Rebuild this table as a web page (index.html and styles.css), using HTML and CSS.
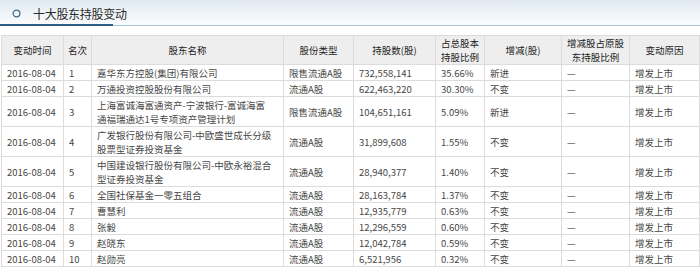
FILE: index.html
```html
<!DOCTYPE html>
<html lang="zh-CN">
<head>
<meta charset="utf-8">
<title>十大股东持股变动</title>
<link rel="stylesheet" href="styles.css">
</head>
<body>
<div class="panel">
  <div class="panel-head">
    <div class="panel-title">
      <svg class="ring" width="9" height="9" viewBox="0 0 9 9"><circle cx="4.5" cy="4.5" r="3.4" fill="none" stroke="#3f6f8e" stroke-width="1.3"/></svg>
      <span>十大股东持股变动</span>
    </div>
  </div>
  <table class="holders">
    <colgroup>
      <col class="c-date"><col class="c-rank"><col class="c-name"><col class="c-type"><col class="c-num"><col class="c-pct"><col class="c-chg"><col class="c-chgpct"><col class="c-reason">
    </colgroup>
    <thead>
      <tr>
        <th>变动时间</th><th>名次</th><th>股东名称</th><th>股份类型</th><th>持股数(股)</th><th>占总股本<br>持股比例</th><th>增减(股)</th><th>增减股占原股<br>东持股比例</th><th>变动原因</th>
      </tr>
    </thead>
    <tbody>
      <tr><td>2016-08-04</td><td>1</td><td class="name">嘉华东方控股(集团)有限公司</td><td>限售流通A股</td><td>732,558,141</td><td>35.66%</td><td>新进</td><td>—</td><td>增发上市</td></tr>
      <tr><td>2016-08-04</td><td>2</td><td class="name">万通投资控股股份有限公司</td><td>流通A股</td><td>622,463,220</td><td>30.30%</td><td>不变</td><td>—</td><td>增发上市</td></tr>
      <tr><td>2016-08-04</td><td>3</td><td class="name">上海富诚海富通资产-宁波银行-富诚海富通福瑞通达1号专项资产管理计划</td><td>限售流通A股</td><td>104,651,161</td><td>5.09%</td><td>新进</td><td>—</td><td>增发上市</td></tr>
      <tr><td>2016-08-04</td><td>4</td><td class="name">广发银行股份有限公司-中欧盛世成长分级股票型证券投资基金</td><td>流通A股</td><td>31,899,608</td><td>1.55%</td><td>不变</td><td>—</td><td>增发上市</td></tr>
      <tr><td>2016-08-04</td><td>5</td><td class="name">中国建设银行股份有限公司-中欧永裕混合型证券投资基金</td><td>流通A股</td><td>28,940,377</td><td>1.40%</td><td>不变</td><td>—</td><td>增发上市</td></tr>
      <tr><td>2016-08-04</td><td>6</td><td class="name">全国社保基金一零五组合</td><td>流通A股</td><td>28,163,784</td><td>1.37%</td><td>不变</td><td>—</td><td>增发上市</td></tr>
      <tr><td>2016-08-04</td><td>7</td><td class="name">曹慧利</td><td>流通A股</td><td>12,935,779</td><td>0.63%</td><td>不变</td><td>—</td><td>增发上市</td></tr>
      <tr><td>2016-08-04</td><td>8</td><td class="name">张毅</td><td>流通A股</td><td>12,296,559</td><td>0.60%</td><td>不变</td><td>—</td><td>增发上市</td></tr>
      <tr><td>2016-08-04</td><td>9</td><td class="name">赵晓东</td><td>流通A股</td><td>12,042,784</td><td>0.59%</td><td>不变</td><td>—</td><td>增发上市</td></tr>
      <tr><td>2016-08-04</td><td>10</td><td class="name">赵勋亮</td><td>流通A股</td><td>6,521,956</td><td>0.32%</td><td>不变</td><td>—</td><td>增发上市</td></tr>
    </tbody>
  </table>
</div>
</body>
</html>
```
FILE: styles.css
```css
html, body {
  margin: 0;
  padding: 0;
  background: #ffffff;
}
body {
  font-family: "Noto Sans CJK SC", "Noto Sans", sans-serif;
  font-size: 9.5px;
  color: #474747;
}
.panel {
  width: 700px;
}
.panel-head {
  height: 25px;
  background: linear-gradient(to bottom, #e1e9f1 0%, #f1f5f8 60%, #fbfcfd 100%);
  border-bottom: 1px solid #a8c4d8;
  position: relative;
}
.panel-head::after {
  content: "";
  position: absolute;
  left: 0;
  bottom: -1px;
  width: 113px;
  height: 2px;
  background: #2c6088;
}
.panel-title {
  display: flex;
  align-items: center;
  height: 27px;
  padding-left: 12px;
  gap: 12px;
  font-size: 12px;
  color: #2a2a2a;
  letter-spacing: -0.3px;
}
.ring {
  display: block;
}
.holders {
  margin: 9px 0 0 1px;
  width: 698px;
  table-layout: fixed;
  border-collapse: collapse;
}
.c-date { width: 62px; }
.c-rank { width: 28px; }
.c-name { width: 192px; }
.c-type { width: 70px; }
.c-num { width: 82px; }
.c-pct { width: 49px; }
.c-chg { width: 77px; }
.c-chgpct { width: 68px; }
.c-reason { width: 70px; }
.holders th,
.holders td {
  border: 1px solid #dcdcdc;
  vertical-align: middle;
  overflow: hidden;
}
.holders th {
  background: #eeeeee;
  color: #222222;
  font-weight: normal;
  text-align: center;
  line-height: 14px;
  padding: 0 1px;
  height: 28px;
}
.holders td {
  text-align: left;
  line-height: 14px;
  padding: 1px 2px 0 5px;
  font-variant-numeric: tabular-nums;
}
.holders td.name {
  padding-right: 11px;
}
```
